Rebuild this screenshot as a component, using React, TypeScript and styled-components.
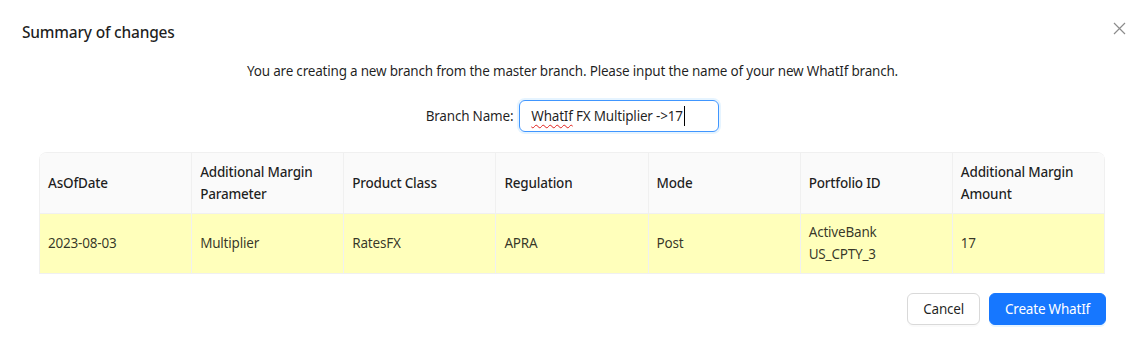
import React from "react";
import styled, { createGlobalStyle } from "styled-components";

const Global = createGlobalStyle`
  html, body { margin: 0; padding: 0; background: #ffffff; }
  body {
    font-family: "Segoe UI", "Noto Sans", "Open Sans", sans-serif;
    font-size: 13.5px;
    letter-spacing: -0.2px;
    color: rgba(0,0,0,0.88);
  }
  * { box-sizing: border-box; }
`;

const Modal = styled.div`
  position: relative;
  width: 1145px;
  height: 337px;
  background: #fff;
  display: flex;
  flex-direction: column;
`;

const Header = styled.div`
  padding: 20px 22px 0;
  height: 44px;
`;

const Title = styled.div`
  font-size: 15.5px;
  line-height: 24px;
  font-weight: 500;
  color: rgba(0, 0, 0, 0.88);
`;

const Close = styled.button`
  position: absolute;
  top: 20px;
  right: 18px;
  width: 16px;
  height: 16px;
  padding: 0;
  border: 0;
  background: transparent;
  display: flex;
  align-items: center;
  justify-content: center;
  color: rgba(0, 0, 0, 0.45);
`;

const Body = styled.div`
  display: flex;
  flex-direction: column;
  align-items: center;
  padding-top: 16px;
`;

const Description = styled.div`
  line-height: 22px;
  color: rgba(0, 0, 0, 0.88);
`;

const FieldRow = styled.div`
  margin-top: 18px;
  display: flex;
  align-items: center;
  gap: 6px;
`;

const Label = styled.span`
  line-height: 22px;
  color: rgba(0, 0, 0, 0.88);
`;

const FakeInput = styled.div`
  width: 200px;
  height: 32px;
  border: 1px solid #4096ff;
  border-radius: 6px;
  box-shadow: 0 0 0 2px rgba(5, 145, 255, 0.1);
  padding: 4px 11px;
  line-height: 22px;
  display: flex;
  align-items: center;
  color: rgba(0, 0, 0, 0.88);
  white-space: pre;
`;

const Misspelled = styled.span`
  text-decoration: underline wavy #e0201c;
  text-decoration-thickness: 1px;
  text-underline-offset: 3px;
`;

const Caret = styled.span`
  display: inline-block;
  width: 1px;
  height: 20px;
  background: #000;
  margin-left: 1px;
`;

const TableWrap = styled.div`
  margin: 20px 40px 0 39px;
  border-radius: 8px 8px 0 0;
  overflow: hidden;
  border-top: 1px solid #f0f0f0;
`;

const Table = styled.table`
  width: 100%;
  table-layout: fixed;
  border-collapse: collapse;
`;

const Th = styled.th`
  background: #fafafa;
  text-align: left;
  font-weight: 500;
  color: rgba(0, 0, 0, 0.88);
  line-height: 22px;
  height: 60px;
  padding: 7px 8px;
  border-bottom: 1px solid #f0f0f0;
  border-left: 1px solid #f0f0f0;
  &:last-child { border-right: 1px solid #f0f0f0; }
`;

const Td = styled.td`
  background: #ffffbb;
  line-height: 22px;
  height: 60px;
  padding: 7px 8px;
  color: rgba(0, 0, 0, 0.8);
  border-bottom: 1px solid #f0f0f0;
  border-left: 1px solid #f0f0f0;
  &:last-child { border-right: 1px solid #f0f0f0; }
`;

const Footer = styled.div`
  margin-top: 19px;
  padding-right: 39px;
  display: flex;
  justify-content: flex-end;
  gap: 9px;
`;

const Button = styled.button<{ $primary?: boolean }>`
  height: 32px;
  padding: 4px 15px;
  border-radius: 6px;
  font-family: inherit;
  font-size: 13.5px;
  letter-spacing: -0.2px;
  line-height: 22px;
  cursor: pointer;
  border: 1px solid ${(p) => (p.$primary ? "#1677ff" : "#d9d9d9")};
  background: ${(p) => (p.$primary ? "#1677ff" : "#fff")};
  color: ${(p) => (p.$primary ? "#fff" : "rgba(0,0,0,0.88)")};
  box-shadow: ${(p) => (p.$primary ? "0 2px 0 rgba(5,145,255,0.1)" : "0 2px 0 rgba(0,0,0,0.02)")};
`;

const headers = [
  "AsOfDate",
  "Additional Margin Parameter",
  "Product Class",
  "Regulation",
  "Mode",
  "Portfolio ID",
  "Additional Margin Amount",
];

const row = ["2023-08-03", "Multiplier", "RatesFX", "APRA", "Post", "ActiveBank US_CPTY_3", "17"];

export default function App() {
  return (
    <>
      <Global />
      <Modal>
        <Header>
          <Title>Summary of changes</Title>
        </Header>
        <Close aria-label="Close">
          <svg width="13" height="13" viewBox="0 0 13 13" fill="none" stroke="currentColor" strokeWidth="1.2">
            <path d="M1 1 L12 12 M12 1 L1 12" />
          </svg>
        </Close>
        <Body>
          <Description>
            You are creating a new branch from the master branch. Please input the name of your new WhatIf branch.
          </Description>
          <FieldRow>
            <Label>Branch Name:</Label>
            <FakeInput>
              <Misspelled>WhatIf</Misspelled>
              {" FX Multiplier ->17"}
              <Caret />
            </FakeInput>
          </FieldRow>
        </Body>
        <TableWrap>
          <Table>
            <thead>
              <tr>
                {headers.map((h) => (
                  <Th key={h}>{h}</Th>
                ))}
              </tr>
            </thead>
            <tbody>
              <tr>
                {row.map((c, i) => (
                  <Td key={i}>{c}</Td>
                ))}
              </tr>
            </tbody>
          </Table>
        </TableWrap>
        <Footer>
          <Button>Cancel</Button>
          <Button $primary>Create WhatIf</Button>
        </Footer>
      </Modal>
    </>
  );
}
